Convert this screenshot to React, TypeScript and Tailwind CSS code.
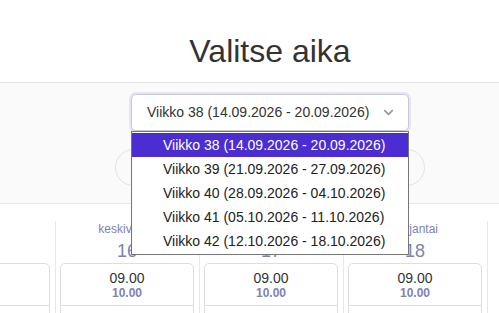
import { ChevronDown, ChevronLeft, ChevronRight } from 'lucide-react';

const weeks = [
  'Viikko 38 (14.09.2026 - 20.09.2026)',
  'Viikko 39 (21.09.2026 - 27.09.2026)',
  'Viikko 40 (28.09.2026 - 04.10.2026)',
  'Viikko 41 (05.10.2026 - 11.10.2026)',
  'Viikko 42 (12.10.2026 - 18.10.2026)',
];

type Day = { name: string; date: string; slots: [string, string][] };

const days: Day[] = [
  { name: '', date: '', slots: [['', ''], ['', '']] },
  { name: 'keskiviikko', date: '16', slots: [['09.00', '10.00'], ['11.00', '12.00']] },
  { name: 'torstai', date: '17', slots: [['09.00', '10.00'], ['11.00', '12.00']] },
  { name: 'perjantai', date: '18', slots: [['09.00', '10.00'], ['11.00', '12.00']] },
  { name: '', date: '', slots: [] },
];

function DayColumn({ day }: { day: Day }) {
  return (
    <div className="w-[144px] shrink-0 border-l border-[#e8e8e8] pl-[4px] pr-[5px]">
      <div className="flex h-[42px] flex-col items-center">
        <span className="mt-[1px] h-[14px] text-[12px] leading-[14px] text-[#7d84b2]">{day.name}</span>
        <span className="mt-[4px] h-[22px] text-[18px] leading-[22px] text-[#7d84b2]">{day.date}</span>
      </div>
      {day.slots.length > 0 && (
        <div className="rounded-t-[5px] border border-[#dedede]">
          {day.slots.map(([start, end], i) => (
            <div
              key={i}
              className="flex h-[42px] flex-col items-center justify-center border-b border-[#dedede]"
            >
              <span className="text-[14px] leading-[16px] text-[#333]">{start}</span>
              <span className="text-[12px] font-bold leading-[14px] text-[#7d84b2]">{end}</span>
            </div>
          ))}
        </div>
      )}
    </div>
  );
}

export default function App() {
  return (
    <div
      className="relative h-[313px] w-[499px] overflow-hidden bg-white"
      style={{ fontFamily: '"Liberation Sans", Arial, sans-serif' }}
    >
      <div className="flex h-[83px] items-end justify-center border-b border-[#e3e3e3] pb-[11px] pl-[41px]">
        <h1 className="text-[32px] leading-[40px] text-[#333]">Valitse aika</h1>
      </div>

      <div className="flex flex-col items-center border-b border-[#e6e6e6] bg-[#fafafa] pb-[17px] pl-[41px] pt-[11px]">
        <div className="flex h-[37px] w-[278px] items-center justify-between rounded-[5px] border border-[#c9c9d3] bg-white pl-[15px] pr-[12px] shadow-[0_0_0_2px_#e7e5f4]">
          <span className="text-[14px] text-[#333]">{weeks[0]}</span>
          <ChevronDown className="h-[15px] w-[15px] text-[#999]" strokeWidth={2.75} />
        </div>
        <div className="mt-[18px] flex w-[310px] items-center justify-between">
          <button className="flex h-[37px] w-[37px] items-center justify-center rounded-full border border-[#e2e2e2] bg-[#fafafa] text-[#aab]">
            <ChevronLeft className="h-[12px] w-[12px]" />
          </button>
          <button className="flex h-[37px] w-[37px] items-center justify-center rounded-full border border-[#e2e2e2] bg-[#fafafa] text-[#aab]">
            <ChevronRight className="h-[12px] w-[12px]" />
          </button>
        </div>
      </div>

      <div className="ml-[-89px] mt-[17px] flex">
        {days.map((d, i) => (
          <DayColumn key={i} day={d} />
        ))}
      </div>

      <ul className="absolute left-[131px] top-[131px] w-[278px] border border-[#767676] bg-white py-[1px]">
        {weeks.map((w, i) => (
          <li
            key={w}
            className={
              i === 0
                ? 'flex h-[24px] items-center bg-[#4b2dd1] pl-[31px] text-[14px] text-white'
                : 'flex h-[24px] items-center pl-[31px] text-[14px] text-[#222]'
            }
          >
            {w}
          </li>
        ))}
      </ul>
    </div>
  );
}
